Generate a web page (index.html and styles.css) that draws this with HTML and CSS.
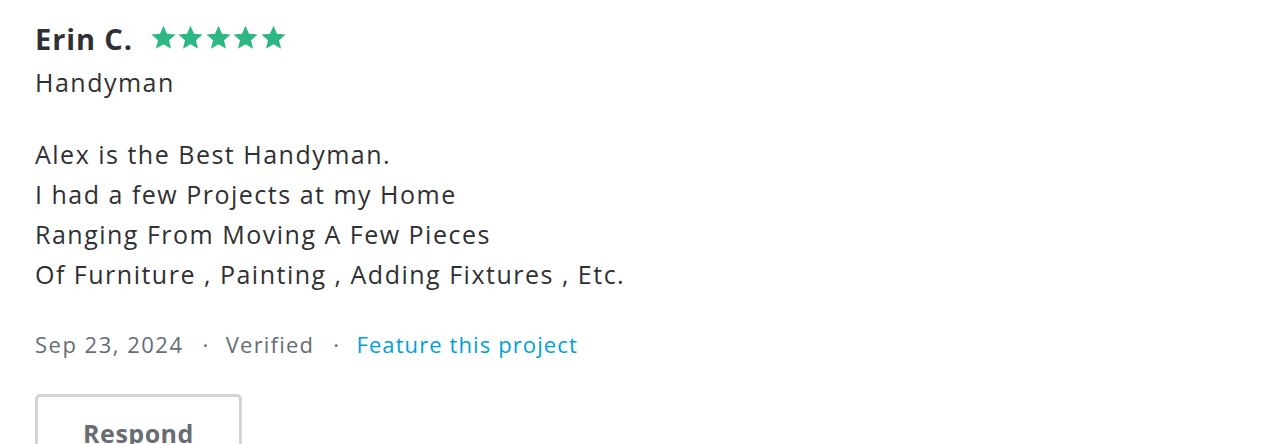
FILE: index.html
```html
<!DOCTYPE html>
<html>
<head>
<meta charset="utf-8">
<link rel="stylesheet" href="styles.css">
</head>
<body>
<div class="review">
  <div class="header">
    <span class="name">Erin C.</span>
    <span class="stars">
      <svg viewBox="0 0 24 24"><path d="M12 1.5l3.1 7.2 7.7.6-5.9 5.1 1.8 7.6L12 17.9 5.3 22l1.8-7.6L1.2 9.3l7.7-.6z"/></svg>
      <svg viewBox="0 0 24 24"><path d="M12 1.5l3.1 7.2 7.7.6-5.9 5.1 1.8 7.6L12 17.9 5.3 22l1.8-7.6L1.2 9.3l7.7-.6z"/></svg>
      <svg viewBox="0 0 24 24"><path d="M12 1.5l3.1 7.2 7.7.6-5.9 5.1 1.8 7.6L12 17.9 5.3 22l1.8-7.6L1.2 9.3l7.7-.6z"/></svg>
      <svg viewBox="0 0 24 24"><path d="M12 1.5l3.1 7.2 7.7.6-5.9 5.1 1.8 7.6L12 17.9 5.3 22l1.8-7.6L1.2 9.3l7.7-.6z"/></svg>
      <svg viewBox="0 0 24 24"><path d="M12 1.5l3.1 7.2 7.7.6-5.9 5.1 1.8 7.6L12 17.9 5.3 22l1.8-7.6L1.2 9.3l7.7-.6z"/></svg>
    </span>
  </div>
  <div class="service">Handyman</div>
  <div class="body">
    <p>Alex is the Best Handyman.</p>
    <p>I had a few Projects at my Home</p>
    <p>Ranging From Moving A Few Pieces</p>
    <p>Of Furniture , Painting , Adding Fixtures , Etc.</p>
  </div>
  <div class="meta">
    <span>Sep 23, 2024</span>
    <span class="dot">·</span>
    <span class="verified">Verified</span>
    <span class="dot">·</span>
    <a class="feature" href="#">Feature this project</a>
  </div>
  <button class="respond">Respond</button>
</div>
</body>
</html>
```
FILE: styles.css
```css
* { box-sizing: border-box; }
body {
  margin: 0;
  background: #fff;
  font-family: "Open Sans", "Noto Sans", sans-serif;
  color: #2f3033;
}
.review {
  padding: 18px 35px 0;
}
.header {
  display: flex;
  align-items: center;
  gap: 17px;
  height: 40px;
}
.name {
  font-size: 29px;
  font-weight: 700;
  color: #2f3033;
  letter-spacing: 0.9px;
}
.stars {
  display: flex;
  gap: 0.5px;
  margin-top: -2px;
}
.stars svg {
  width: 27px;
  height: 27px;
  fill: #2db783;
}
.service {
  font-size: 25px;
  line-height: 40px;
  margin-top: 4px;
  letter-spacing: 1.5px;
}
.body {
  margin-top: 32px;
  font-size: 25px;
  line-height: 40px;
  letter-spacing: 1.5px;
}
.body p { margin: 0; }
.meta {
  margin-top: 35px;
  display: flex;
  align-items: center;
  font-size: 22px;
  line-height: 30px;
  color: #676d73;
  letter-spacing: 1.5px;
}
.dot { margin: 0 16px 0 19px; }
.verified { letter-spacing: 1.2px; }
.feature {
  color: #009fd9;
  text-decoration: none;
  letter-spacing: 1.1px;
}
.respond {
  margin-top: 35px;
  width: 207px;
  height: 78px;
  border: 3px solid #d3d4d5;
  border-radius: 5px;
  background: #fff;
  font-family: inherit;
  font-size: 25px;
  font-weight: 700;
  letter-spacing: 0.5px;
  color: #676d73;
  padding: 0;
}
```
